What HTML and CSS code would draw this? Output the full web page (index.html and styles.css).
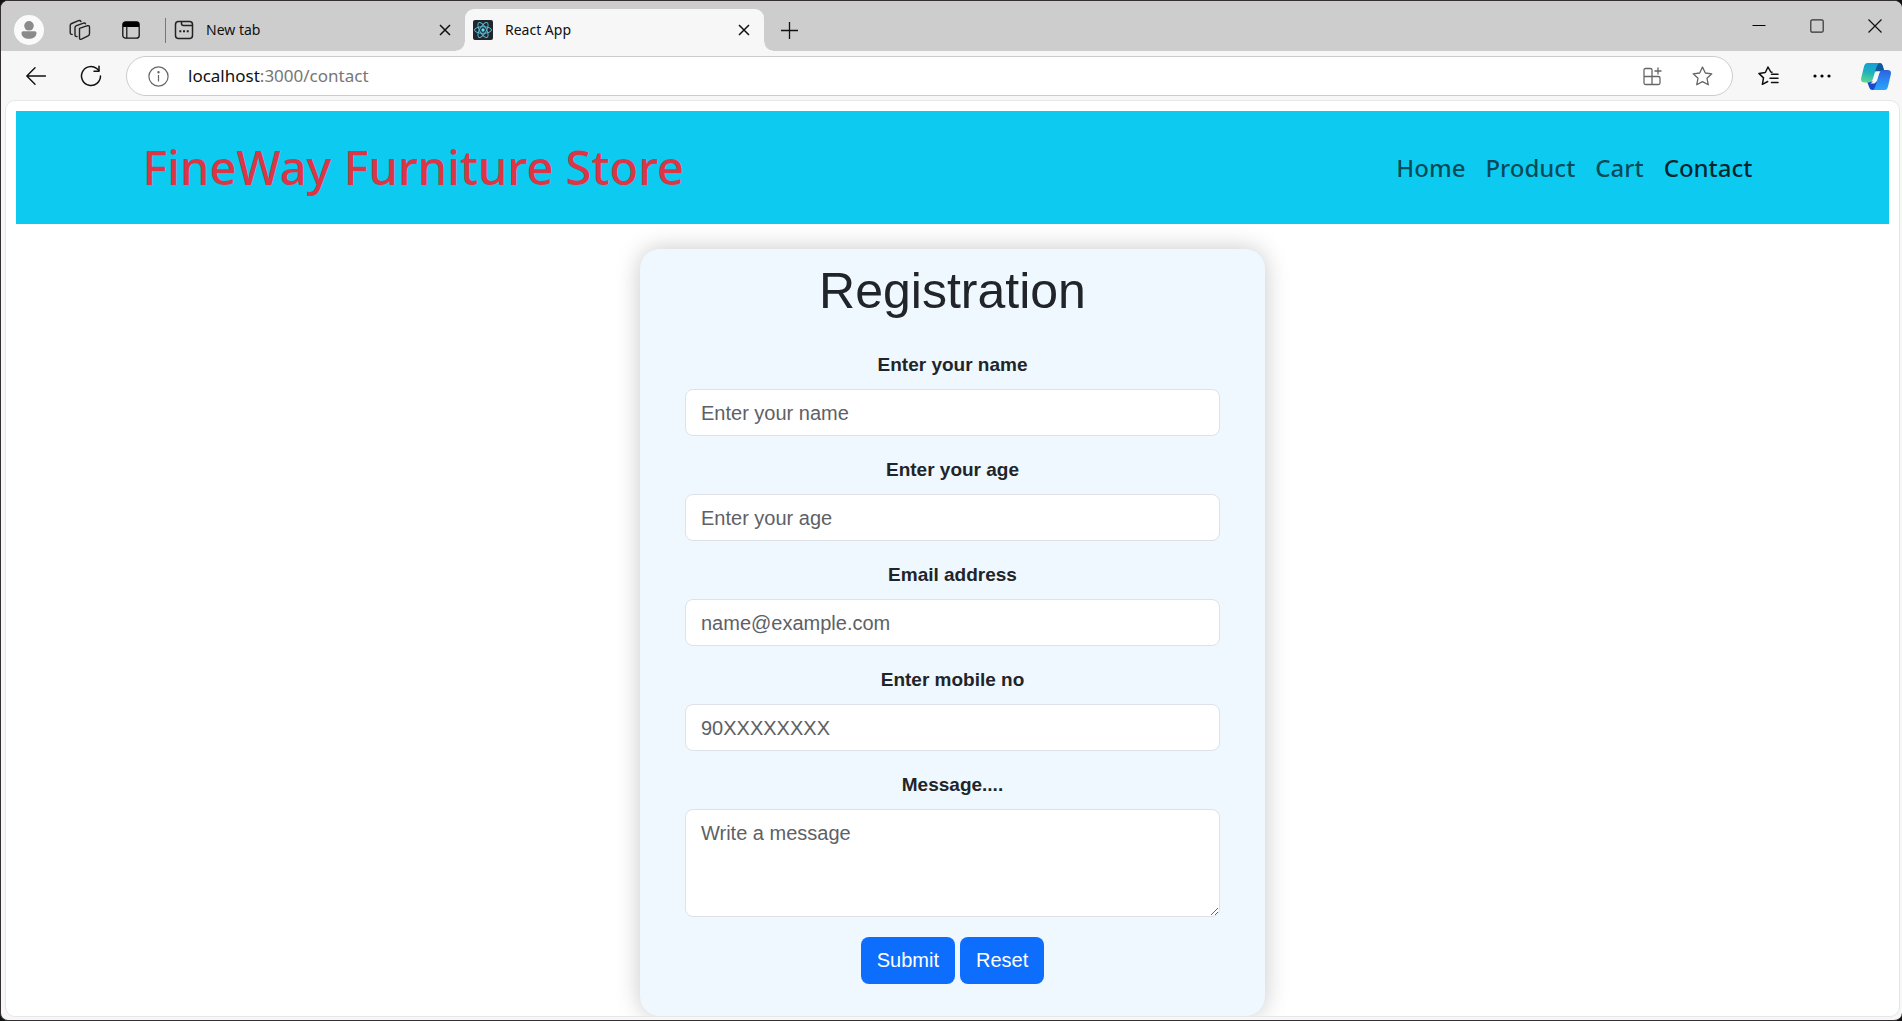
FILE: index.html
```html
<!DOCTYPE html>
<html lang="en">
<head>
<meta charset="utf-8">
<title>React App</title>
<link rel="stylesheet" href="styles.css">
</head>
<body>
<div class="window">
  <header class="tabstrip">
    <button class="strip-btn" aria-label="Profile">
      <svg width="30" height="30" viewBox="0 0 30 30"><circle cx="15" cy="15" r="15" fill="#fafafa"/><circle cx="15" cy="10.800" r="4.800" fill="#8b8b8b"/><path d="M7.500 17.800q0-1.600 1.600-1.600h11.800q1.600 0 1.600 1.600c0 4-3.300 6-7.500 6s-7.500-2-7.500-6z" fill="#8b8b8b"/></svg>
    </button>
    <button class="strip-btn" aria-label="Workspaces">
      <svg width="22" height="22" viewBox="0 0 22 22" fill="none" stroke="#222" stroke-width="1.400" stroke-linejoin="round" stroke-linecap="round"><path d="M10.500 9.300l8-2.600q2-.5 2 1.500v6.600q0 1.500-1.400 2l-6.600 3.400q-2 .7-2-1.400v-7.800q0-1.300 0-1.700z"/><path d="M8 17.500q-2 .3-2-1.600V8.800q0-1.500 1.500-2.100l7-2.600q1.600-.4 2 .8"/><path d="M3.200 15.400q-2 0-2-1.800V6.600q0-1.500 1.500-2.100L9.500 1.700q1.800-.5 2.400.8"/></svg>
    </button>
    <button class="strip-btn" aria-label="Tab actions menu">
      <svg width="18" height="18" viewBox="0 0 18 18"><rect x=".8" y=".8" width="16.400" height="16.400" rx="2.800" fill="none" stroke="#111" stroke-width="1.300"/><path d="M1 6V3q0-2.200 2.200-2.200h11.600Q17 .8 17 3v3z" fill="#000"/><path d="M4.800 5v12" stroke="#111" stroke-width="1.200"/></svg>
    </button>
    <span class="separator"></span>
    <div class="tab">
      <svg class="tab-icon" width="20" height="20" viewBox="0 0 20 20" fill="none" stroke="#222" stroke-width="1.500"><rect x="1.500" y="1.500" width="17" height="17" rx="3"/><path d="M7.500 1.500v2q0 2 2 2h9"/><path d="M5.300 11.300h2M9 11.300h2M12.700 11.300h2" stroke-width="2"/></svg>
      <span class="tab-title">New tab</span>
      <button class="tab-close" aria-label="Close New tab"><svg width="12" height="12" viewBox="0 0 12 12" stroke="#111" stroke-width="1.500"><path d="M1 1l10 10M11 1L1 11"/></svg></button>
    </div>
    <div class="tab tab-active">
      <svg class="tab-icon" width="20" height="20" viewBox="0 0 20 20"><rect width="20" height="20" rx="2" fill="#20262b"/><g fill="none" stroke="#58b9d3" stroke-width="1"><ellipse cx="10" cy="10" rx="8.500" ry="3.300"/><ellipse cx="10" cy="10" rx="8.500" ry="3.300" transform="rotate(60 10 10)"/><ellipse cx="10" cy="10" rx="8.500" ry="3.300" transform="rotate(120 10 10)"/></g><circle cx="10" cy="10" r="1.700" fill="#61dafb"/></svg>
      <span class="tab-title">React App</span>
      <button class="tab-close" aria-label="Close React App"><svg width="12" height="12" viewBox="0 0 12 12" stroke="#111" stroke-width="1.500"><path d="M1 1l10 10M11 1L1 11"/></svg></button>
    </div>
    <button class="strip-btn" aria-label="New tab"><svg width="17" height="17" viewBox="0 0 17 17" stroke="#111" stroke-width="1.300"><path d="M8.500 0v17M0 8.500h17"/></svg></button>
    <div class="window-controls">
      <button class="window-btn" aria-label="Minimize"><svg width="14" height="14" viewBox="0 0 14 14"><path d="M.5 6.500h13" stroke="#000"/></svg></button>
      <button class="window-btn" aria-label="Maximize"><svg width="14" height="14" viewBox="0 0 14 14"><rect x=".8" y=".8" width="12.400" height="12.400" rx="1.500" fill="none" stroke="#333" stroke-width="1.200"/></svg></button>
      <button class="window-btn" aria-label="Close"><svg width="14" height="14" viewBox="0 0 14 14"><path d="M.5 .5l13 13M13.500 .5l-13 13" stroke="#111" stroke-width="1.200"/></svg></button>
    </div>
  </header>

  <div class="toolbar">
    <button class="tool-btn" aria-label="Back"><svg width="20" height="18" viewBox="0 0 20 18" fill="none" stroke="#111" stroke-width="1.400" stroke-linecap="round" stroke-linejoin="round"><path d="M19.500 9H.8M9 .8L.8 9 9 17.200"/></svg></button>
    <button class="tool-btn" aria-label="Refresh"><svg width="22" height="22" viewBox="0 0 22 22" fill="none" stroke="#111" stroke-width="1.500" stroke-linecap="round" stroke-linejoin="round"><path d="M20.500 11A9.500 9.500 0 1 1 16.500 3.300L18.800 5.500"/><path d="M19 1.200v5h-5"/></svg></button>
    <div class="address">
      <svg width="21" height="21" viewBox="0 0 21 21" fill="none" stroke="#666" stroke-width="1.200"><circle cx="10.500" cy="10.500" r="9.600"/><path d="M10.500 9v6.500"/><circle cx="10.500" cy="6.200" r=".6" fill="#666"/></svg>
      <span class="url">localhost<span class="url-rest">:3000/contact</span></span>
      <button class="address-btn" aria-label="Install app"><svg width="19" height="19" viewBox="0 0 19 19" fill="none" stroke="#666" stroke-width="1.300"><path d="M9 9.500V3q0-1.500-1.500-1.500H2.500Q1 1.500 1 3v13q0 1.500 1.500 1.500h13q1.500 0 1.500-1.500v-5q0-1.500-1.500-1.500H1M9 9.500v8"/><path d="M15 .5v7M11.500 4h7"/></svg></button>
      <button class="address-btn" aria-label="Add to favorites"><svg width="21" height="20" viewBox="0 0 21 20" fill="none" stroke="#666" stroke-width="1.300" stroke-linejoin="round"><path d="M10.500 1l2.800 6 6.500.8-4.800 4.500 1.300 6.500-5.800-3.200-5.800 3.200L6 12.300 1.200 7.800 7.700 7z"/></svg></button>
    </div>
    <div class="tools">
      <button class="tool-icon" aria-label="Favorites"><svg width="21" height="20" viewBox="0 0 21 20" fill="none" stroke="#111" stroke-width="1.500" stroke-linejoin="round" stroke-linecap="round"><path d="M14 6.200l-1.200-.2L10 1 7.300 6.500.9 7.400l4.600 4.500-1.100 6.400 5.300-2.800"/><path d="M13.500 8.200h6.500M12 12.300h8M13.500 16.400h6.500"/></svg></button>
      <button class="tool-icon" aria-label="Settings and more"><svg width="18" height="4" viewBox="0 0 18 4"><circle cx="2" cy="2" r="1.600"/><circle cx="9" cy="2" r="1.600"/><circle cx="16" cy="2" r="1.600"/></svg></button>
      <button class="tool-icon" aria-label="Copilot"><svg width="30" height="27" viewBox="0 0 30 27">
        <defs>
          <linearGradient id="cpA" x1=".5" y1="0" x2=".3" y2="1"><stop offset="0" stop-color="#149fd6"/><stop offset=".5" stop-color="#20b3bb"/><stop offset="1" stop-color="#5fd98a"/></linearGradient>
          <linearGradient id="cpB" x1="0" y1="0" x2="0" y2="1"><stop offset="0" stop-color="#2d62dc"/><stop offset=".5" stop-color="#2a86f0"/><stop offset="1" stop-color="#2aa5f7"/></linearGradient>
        </defs>
        <path d="M12 0h7q2 0 2.600 2l2 6.500H14z" fill="#0d5a9c"/>
        <path d="M18 27h-6.500q-2.400 0-3-2L6 18.500h10z" fill="#1a48cc"/>
        <path d="M6.500 0H18.500q-2 .8-3 4l-3.500 11.500q-1.200 4-5 4H3.500Q-.8 19.500.2 15L3 3.500Q3.800 0 6.500 0z" fill="url(#cpA)"/>
        <path d="M23.500 27H11.500q2-.8 3-4L18 11q1.200-4 5-4h3.500q4.300 0 3.300 4.500L27 23.500Q26.200 27 23.500 27z" fill="url(#cpB)"/>
        <path d="M15 8.500h4.200q-1.400.9-2 3l-2.200 7.300q-.5 1.700-2 1.700H9.300q2.300-.9 3-3.200z" fill="#f7f7f7"/>
      </svg></button>
    </div>
  </div>

  <div class="page">
    <nav class="navbar">
      <div class="container">
        <h1 class="brand">FineWay Furniture Store</h1>
        <div class="nav-links">
          <a class="nav-link" href="#home">Home</a>
          <a class="nav-link" href="#product">Product</a>
          <a class="nav-link" href="#cart">Cart</a>
          <a class="nav-link active" href="#contact">Contact</a>
        </div>
      </div>
    </nav>

    <form class="card">
      <h2 class="card-title">Registration</h2>
      <div class="field">
        <label for="name">Enter your name</label>
        <input id="name" type="text" placeholder="Enter your name">
      </div>
      <div class="field">
        <label for="age">Enter your age</label>
        <input id="age" type="text" placeholder="Enter your age">
      </div>
      <div class="field">
        <label for="email">Email address</label>
        <input id="email" type="email" placeholder="name@example.com">
      </div>
      <div class="field">
        <label for="mobile">Enter mobile no</label>
        <input id="mobile" type="tel" placeholder="90XXXXXXXX">
      </div>
      <div class="field">
        <label for="message">Message....</label>
        <textarea id="message" placeholder="Write a message"></textarea>
      </div>
      <div class="actions">
        <button class="btn" type="submit">Submit</button>
        <button class="btn" type="reset">Reset</button>
      </div>
    </form>
  </div>
</div>
</body>
</html>
```
FILE: styles.css
```css
* {
  box-sizing: border-box;
}

body {
  margin: 0;
  background: #111;
  font-family: "Noto Sans", "Open Sans", sans-serif;
  color: #212529;
}

button {
  margin: 0;
  padding: 0;
  border: 0;
  background: none;
  font: inherit;
}

svg {
  display: block;
  flex: none;
}

.window {
  display: flex;
  flex-direction: column;
  min-height: 100vh;
  border: solid #332f33;
  border-width: 1px 0 1px 1px;
  border-radius: 8px;
  background: #f7f7f7;
  overflow: hidden;
}

/* Tab strip */
.tabstrip {
  display: flex;
  align-items: stretch;
  height: 50px;
  padding: 8px 0 0 2px;
  background: #cdcdcd;
}

.strip-btn {
  display: flex;
  align-items: center;
  justify-content: center;
  width: 51px;
}

.separator {
  align-self: center;
  width: 1px;
  height: 25px;
  margin-left: 9px;
  background: #777;
}

.tab {
  position: relative;
  display: flex;
  align-items: center;
  gap: 12px;
  width: 299px;
  padding: 0 10px 0 8px;
  font-size: 14px;
  line-height: 18px;
  color: #111;
}

.tab-active {
  border-radius: 9px 9px 0 0;
  background: #f7f7f7;
}

.tab-active::before,
.tab-active::after {
  content: "";
  position: absolute;
  bottom: 0;
  width: 9px;
  height: 9px;
}

.tab-active::before {
  right: 100%;
  background: radial-gradient(circle at 0 0, transparent 8px, #f7f7f7 9px);
}

.tab-active::after {
  left: 100%;
  background: radial-gradient(circle at 100% 0, transparent 8px, #f7f7f7 9px);
}

.tab-title {
  flex: 1;
}

.tab-close {
  display: flex;
  align-items: center;
  justify-content: center;
  width: 20px;
  height: 20px;
}

.window-controls {
  display: flex;
  gap: 4px;
  height: 34px;
  margin-left: auto;
}

.window-btn {
  display: flex;
  align-items: center;
  justify-content: center;
  width: 54px;
}

/* Toolbar */
.toolbar {
  display: flex;
  padding: 5px 0 4px 7px;
}

.tool-btn {
  display: flex;
  align-items: center;
  justify-content: center;
  width: 55px;
}

.address {
  flex: 1;
  display: flex;
  align-items: center;
  height: 40px;
  margin: 0 9px 0 8px;
  padding: 0 5px 0 21px;
  border: 1px solid #ccc;
  border-radius: 20px;
  background: #fff;
}

.url {
  flex: 1;
  margin-left: 19px;
  font-size: 17px;
  line-height: 20px;
  color: #111;
}

.url-rest {
  color: #767676;
}

.address-btn {
  display: flex;
  align-items: center;
  justify-content: center;
  width: 50px;
  height: 36px;
}

.tools {
  display: flex;
  gap: 2px;
}

.tool-icon {
  display: flex;
  align-items: center;
  justify-content: center;
  width: 52px;
}

/* Page */
.page {
  flex: 1;
  margin: 0 2px 3px 4px;
  padding: 10px 10px 0;
  border: 1px solid #e6e6e6;
  border-radius: 10px;
  background: #fff;
  overflow: hidden;
}

.navbar {
  padding: 20px 0;
  background: #0dcaf0;
}

.container {
  display: flex;
  align-items: center;
  justify-content: space-between;
  max-width: 1650px;
  margin: 0 auto;
  padding: 0 15px;
}

.brand {
  margin: 0;
  font-size: 47px;
  font-weight: 500;
  line-height: 73px;
  color: #dc3545;
}

.nav-links {
  display: flex;
}

.nav-link {
  padding: 0 10px;
  font-size: 24px;
  font-weight: 500;
  line-height: 38px;
  color: rgba(0, 0, 0, 0.65);
  text-decoration: none;
}

.nav-link.active {
  color: rgba(0, 0, 0, 0.82);
}

/* Registration form */
.card {
  max-width: 625px;
  margin: 25px auto 0;
  padding: 12px 45px 32px;
  border-radius: 20px;
  background: #eff8ff;
  box-shadow: 0 0 25px rgba(0, 0, 0, 0.22);
  font-family: "Liberation Sans", Arial, sans-serif;
  text-align: center;
}

.card-title {
  margin: 0 0 30px;
  font-size: 50px;
  font-weight: 400;
  line-height: 60px;
}

.field {
  display: flex;
  flex-direction: column;
  gap: 10px;
  margin-bottom: 20px;
}

.field label {
  font-size: 19px;
  font-weight: 700;
  line-height: 28px;
}

.field input,
.field textarea {
  width: 100%;
  height: 47px;
  margin: 0;
  padding: 8px 15px 7px;
  border: 1px solid #dee2e6;
  border-radius: 8px;
  background: #fff;
  font: 20px/30px "Liberation Sans", Arial, sans-serif;
  color: #212529;
}

.field textarea {
  height: 108px;
  resize: vertical;
}

.field ::placeholder {
  color: #5d6166;
}

.actions {
  display: flex;
  justify-content: center;
  gap: 5px;
}

.btn {
  padding: 0 16px;
  border-radius: 8px;
  background: #0d6efd;
  font-size: 20px;
  line-height: 47px;
  color: #fff;
}
```
